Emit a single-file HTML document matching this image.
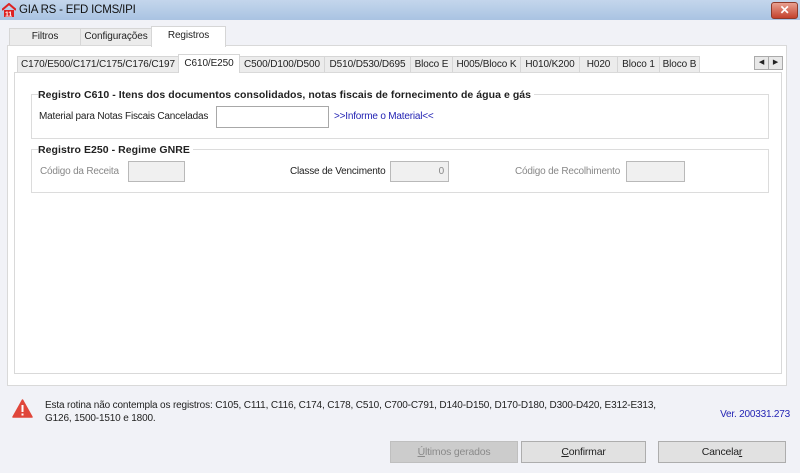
<!DOCTYPE html>
<html><head><meta charset="utf-8"><style>
*{box-sizing:border-box;margin:0;padding:0}
body{width:800px;height:473px;background:#f1f2f7;font-family:"Liberation Sans",sans-serif;font-size:10px;letter-spacing:-0.2px;color:#222;position:relative;overflow:hidden}
.a{position:absolute;white-space:nowrap}
.title{left:0;top:0;width:800px;height:20px;background:linear-gradient(#c4d6ec,#a9c3e2);}
.tab{position:absolute;border:1px solid #d6d6d6;background:#ececec;text-align:center;line-height:16px;font-size:10px;letter-spacing:-0.1px;white-space:nowrap;overflow:hidden}
.sel{background:#fff;border-bottom:none}
.grp{position:absolute;border:1px solid #dcdcdc}
.gt{position:absolute;background:#fff;font-weight:bold;font-size:10.5px;letter-spacing:0.05px;padding-right:3px}
.inp{position:absolute;border:1px solid #a8a8a8;background:#fff}
.dis{background:#f0f0f0;border-color:#b9b9b9}
.lbl{color:#888}
.btn{position:absolute;border:1px solid #adadad;background:#e1e1e1;text-align:center;line-height:20px;font-size:10.5px}
</style></head><body>
<div class="a title"></div>
<svg class="a" style="left:2px;top:3px" width="14" height="14" viewBox="0 0 14 14"><path d="M0 7 L7 1 L14 7" stroke="#d22" stroke-width="2" fill="none"/><rect x="2" y="7" width="10" height="7" fill="#d22"/><text x="3" y="13.5" font-size="7" fill="#fff" font-family="Liberation Sans" font-weight="bold">11</text></svg>
<div class="a" style="left:19px;top:4px;font-size:11.5px;color:#111">GIA RS - EFD ICMS/IPI</div>
<div class="a" style="left:771px;top:2px;width:27px;height:17px;background:linear-gradient(#e8a090,#c4412c);border:1px solid #8e3a2a;border-radius:3px;color:#fff;text-align:center;font-weight:bold;line-height:15px;font-size:12px">✕</div>

<div class="tab" style="left:9px;top:28px;width:72px;height:18px">Filtros</div>
<div class="tab" style="left:80px;top:28px;width:72px;height:18px">Configurações</div>
<div class="a" style="left:7px;top:45px;width:780px;height:341px;background:#fff;border:1px solid #d9d9d9"></div>
<div class="tab sel" style="left:151px;top:26px;width:75px;height:21px;line-height:18px">Registros</div>

<div class="tab" style="left:17px;top:56px;width:162px;height:17px">C170/E500/C171/C175/C176/C197</div>
<div class="tab" style="left:239px;top:56px;width:86px;height:17px">C500/D100/D500</div>
<div class="tab" style="left:324px;top:56px;width:87px;height:17px">D510/D530/D695</div>
<div class="tab" style="left:410px;top:56px;width:43px;height:17px">Bloco E</div>
<div class="tab" style="left:452px;top:56px;width:69px;height:17px">H005/Bloco K</div>
<div class="tab" style="left:520px;top:56px;width:60px;height:17px">H010/K200</div>
<div class="tab" style="left:579px;top:56px;width:39px;height:17px">H020</div>
<div class="tab" style="left:617px;top:56px;width:43px;height:17px">Bloco 1</div>
<div class="tab" style="left:659px;top:56px;width:41px;height:17px">Bloco B</div>
<div class="a" style="left:754px;top:56px;width:15px;height:14px;border:1px solid #aaa;background:#e8e8e8;font-size:7px;text-align:center;line-height:12px">◀</div>
<div class="a" style="left:768px;top:56px;width:15px;height:14px;border:1px solid #aaa;background:#e8e8e8;font-size:7px;text-align:center;line-height:12px">▶</div>
<div class="a" style="left:14px;top:72px;width:768px;height:302px;background:#fff;border:1px solid #d9d9d9"></div>
<div class="tab sel" style="left:178px;top:54px;width:62px;height:19px;line-height:18px">C610/E250</div>

<div class="grp" style="left:31px;top:94px;width:738px;height:45px"></div>
<div class="gt" style="left:38px;top:89px">Registro C610 - Itens dos documentos consolidados, notas fiscais de fornecimento de água e gás</div>
<div class="a" style="left:39px;top:111px">Material para Notas Fiscais Canceladas</div>
<div class="inp" style="left:216px;top:106px;width:113px;height:22px"></div>
<div class="a" style="left:334px;top:111px;color:#2424b4">&gt;&gt;Informe o Material&lt;&lt;</div>

<div class="grp" style="left:31px;top:149px;width:738px;height:44px"></div>
<div class="gt" style="left:38px;top:144px">Registro E250 - Regime GNRE</div>
<div class="a lbl" style="left:40px;top:166px">Código da Receita</div>
<div class="inp dis" style="left:128px;top:161px;width:57px;height:21px"></div>
<div class="a" style="left:290px;top:166px">Classe de Vencimento</div>
<div class="inp dis" style="left:390px;top:161px;width:59px;height:21px;text-align:right;padding-right:4px;line-height:19px;color:#888">0</div>
<div class="a lbl" style="left:515px;top:166px">Código de Recolhimento</div>
<div class="inp dis" style="left:626px;top:161px;width:59px;height:21px"></div>

<svg class="a" style="left:12px;top:399px" width="21" height="19" viewBox="0 0 21 19"><path d="M10.5 1 L20 18 L1 18 Z" fill="#e0463a" stroke="#e0463a" stroke-linejoin="round" stroke-width="1.5"/><rect x="9.5" y="6" width="2" height="7" fill="#fff"/><rect x="9.5" y="14.5" width="2" height="2" fill="#fff"/></svg>
<div class="a" style="left:45px;top:400px;font-size:10px;letter-spacing:-0.15px">Esta rotina não contempla os registros: C105, C111, C116, C174, C178, C510, C700-C791, D140-D150, D170-D180, D300-D420, E312-E313,</div>
<div class="a" style="left:45px;top:413px;font-size:10px;letter-spacing:-0.15px">G126, 1500-1510 e 1800.</div>
<div class="a" style="right:10px;top:409px;color:#2424b4;font-size:10px">Ver. 200331.273</div>

<div class="btn" style="left:390px;top:441px;width:128px;height:22px;background:#cccccc;border-color:#bfbfbf;color:#8a8a8a"><u>Ú</u>ltimos gerados</div>
<div class="btn" style="left:521px;top:441px;width:125px;height:22px"><u>C</u>onfirmar</div>
<div class="btn" style="left:658px;top:441px;width:128px;height:22px">Cancela<u>r</u></div>
</body></html>
